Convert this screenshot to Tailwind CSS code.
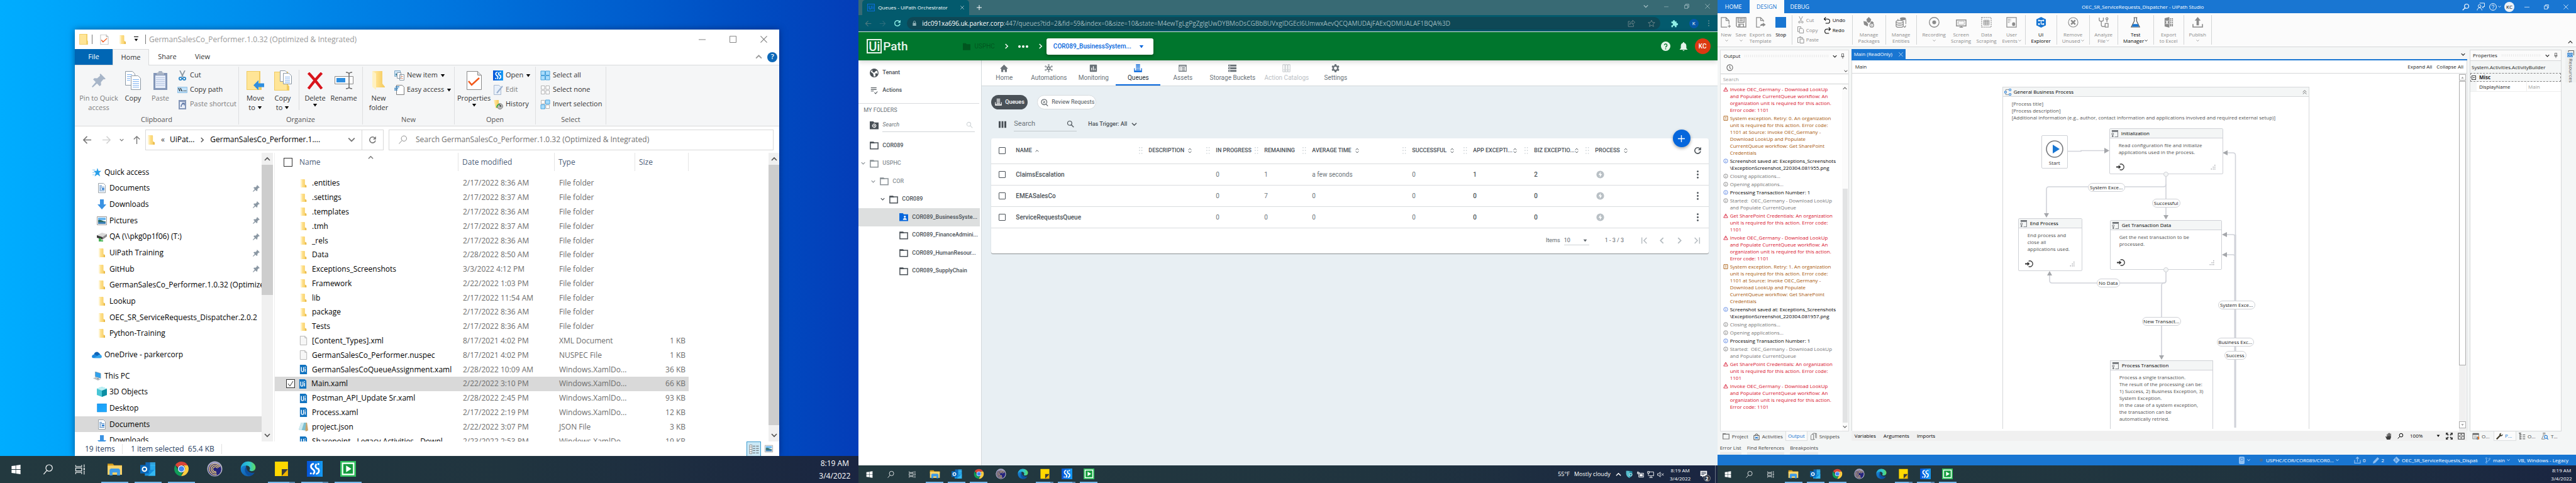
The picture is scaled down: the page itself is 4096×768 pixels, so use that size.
<!DOCTYPE html>
<html lang="en">
<head>
<meta charset="utf-8">
<title>Three desktops</title>
<script src="https://cdn.jsdelivr.net/npm/@tailwindcss/browser@4"></script>
</head>
<body class="relative grid h-screen grid-cols-3 overflow-hidden bg-[#1b2842] font-['Open_Sans',sans-serif] text-black">

<!-- Icon library -->
<svg class="absolute size-0" aria-hidden="true">
<defs>
<linearGradient id="gFold" x1="0" x2="1"><stop offset="0" stop-color="#fff0bd"/><stop offset=".35" stop-color="#ffe08a"/><stop offset="1" stop-color="#f3c95c"/></linearGradient>
<linearGradient id="gEdge" x1="0" y1="0" x2="1" y2="0"><stop offset="0" stop-color="#1aa6e0"/><stop offset=".6" stop-color="#34c8c8"/><stop offset="1" stop-color="#5fdc5a"/></linearGradient>
<linearGradient id="gEdge2" x1="0" y1="0" x2="1" y2="1"><stop offset="0" stop-color="#1b8fe0"/><stop offset="1" stop-color="#0b4c9c"/></linearGradient>
<linearGradient id="gS" x1="0" x2="1"><stop offset="0" stop-color="#0553d8"/><stop offset="1" stop-color="#159cf5"/></linearGradient>
<linearGradient id="gDesk" x1="0" y1="0" x2="1" y2="1"><stop offset="0" stop-color="#1a9cf5"/><stop offset="1" stop-color="#20adff"/></linearGradient>
</defs>
<symbol id="win" viewBox="0 0 24 24"><path fill="#fff" d="M3 5.2 11 4v7.5H3zM12 3.9 21 2.500V11.500H12zM3 12.500h8V20l-8-1.200zM12 12.500h9V21.500L12 20.100z"/></symbol>
<symbol id="srch" viewBox="0 0 24 24"><g fill="none" stroke="#fff" stroke-width="1.500"><circle cx="14" cy="9" r="6.500"/><path d="M9.500 14 3 21.500"/></g></symbol>
<symbol id="taskview" viewBox="0 0 24 24"><g fill="none" stroke="#fff" stroke-width="1.400"><path d="M3 3v3h12V3M3 21v-3h12v3M3 9h12v6H3zM20 2v6M20 14v8"/></g><path fill="#fff" d="M18.500 9.500h3v3h-3z"/></symbol>
<symbol id="explorer" viewBox="0 0 24 24"><path fill="#d39a18" d="M1 4h8l2 2.500h12V11H1z"/><path fill="#fbd469" d="M1 7h22v14H1z"/><path fill="#3f9be8" d="M4 22V13.500l2-2h12l2 2V22h-4.500v-4.500h-7V22z"/></symbol>
<symbol id="outlook" viewBox="0 0 24 24"><path fill="#1066b5" d="M8 2h15v14H8z"/><path fill="#28a8ea" d="M15 6h8v8h-8z"/><path fill="#50d9ff" d="M15 2h8v5h-8z" opacity=".5"/><path fill="#1490df" d="M7 14h16v8.500H7z"/><path fill="#35b8f1" d="M23 12.500 12 22.500h11z"/><path fill="#0a66b8" d="M0 6h13v13H0z"/><circle cx="6.500" cy="12.500" r="3.200" fill="none" stroke="#fff" stroke-width="1.900"/></symbol>
<symbol id="chrome" viewBox="0 0 24 24"><path fill="#db4437" d="M12 1a11 11 0 0 1 9.600 5.800H12A5.500 5.500 0 0 0 7 10L2.600 6.300A11 11 0 0 1 12 1z"/><path fill="#ffcd40" d="M21.600 6.800A11 11 0 0 1 11.500 23l5-8.200a5.500 5.500 0 0 0-1.500-8z"/><path fill="#0f9d58" d="M2.600 6.300 7.200 14.700a5.500 5.500 0 0 0 6.300 2.600L11.500 23A11 11 0 0 1 2.600 6.300z"/><circle cx="12" cy="12" r="5.300" fill="#fff"/><circle cx="12" cy="12" r="4.200" fill="#4285f4"/></symbol>
<symbol id="swirl" viewBox="0 0 24 24"><circle cx="12" cy="12" r="11.500" fill="#b9b7c6"/><circle cx="12" cy="12.500" r="10" fill="#25257e"/><g fill="none" stroke="#f1d27a" stroke-width="1.300"><path d="M20 9a8.500 8.500 0 1 0-5 11.500"/><path d="M18 10a6 6 0 1 0-3.500 8"/><path d="M16 11a3.700 3.700 0 1 0-2 5"/></g><path fill="#9c9cc8" d="M3 7a10 10 0 0 1 18 0C15 2.500 8 3 3 7z"/></symbol>
<symbol id="edge" viewBox="0 0 24 24"><path fill="url(#gEdge2)" d="M.6 12.500C.6 5 6 .6 12.200.6 9 4 8 8 9.500 12.500c2 5 7 6.500 12.300 5.500A11.500 11.500 0 0 1 .6 12.500z"/><path fill="#0c4fa0" d="M8.200 9.500c-3 5 .5 12.500 6.800 12.800 3.500-.8 5.500-2.600 6.800-4.600-3 1.300-9 .8-11-3z"/><path fill="url(#gEdge)" d="M.7 11C1.500 4.500 6.500.6 12.200.6c6.500 0 11.200 4.400 11.200 9 0 4-3 5.900-6 5.900-2 0-4-.8-3-2.200 1.500-2.200-.2-6.300-5-6.300C5 7 2 8.500.7 11z"/></symbol>
<symbol id="sticky" viewBox="0 0 24 24"><path fill="#ffd800" d="M2 1h20v12l-9 10H2z"/><path fill="#3b3b3b" d="M12.500 12.500H22L12.500 23z"/><path fill="#f0b400" d="m22 13-9.500 10H22z"/></symbol>
<symbol id="studio" viewBox="0 0 24 24"><path fill="url(#gS)" d="M0 0h24v24H0z"/><g fill="none" stroke="#fff" stroke-width="2.600" stroke-linecap="round"><path d="M9.500 4.500C5.500 5.500 5 10 9 12.500c3 2 3.500 4.500 1 7"/><path d="M17.500 12c2 3.500.5 6.500-2.500 7.500M14 5.500c-1.500 2-1 4.500 1.500 6"/></g><circle cx="17.500" cy="4.500" r="1.500" fill="#fff"/><circle cx="6" cy="19" r="1.500" fill="#fff"/></symbol>
<symbol id="camtasia" viewBox="0 0 24 24"><path fill="#2fbf5c" d="M0 0h24v24H0z"/><path fill="none" stroke="#fff" stroke-width="2" d="M3.500 3.500h17v17h-17z"/><path fill="#159a3e" d="M5 5h14v14H5z"/><path fill="#fff" d="m9 7 8 5-8 5z"/></symbol>
<symbol id="folder" viewBox="0 0 16 16"><path fill="url(#gFold)" d="M3 1h7l.5 1v8l2.500 1.500V15H4.500z"/><path fill="#e8b94a" d="M11 10.500 13 12v3h-2z"/><path fill="#fff3cc" d="M3 1l2 1.500V16l-2-2z"/></symbol>
<symbol id="folderf" viewBox="0 0 16 20"><path fill="#f0cb62" d="M0 0h15v12l1 1v7H0z"/><path fill="#ffe597" d="M1 1h12v18H1z"/></symbol>
<symbol id="file" viewBox="0 0 16 16"><path fill="#f7f7f7" stroke="#b2b2b2" d="M2.500.5h8l3 3v12h-11z"/><path fill="#ddd" stroke="#b2b2b2" d="M10.500.5v3h3"/></symbol>
<symbol id="uifile" viewBox="0 0 16 16"><path fill="#1173c0" d="M2 0h9.500L14 2.500V16H2z"/><path fill="none" stroke="#fff" stroke-width="1.500" d="M4.500 4v6a1.800 1.800 0 0 0 3.700 0V4M11 6.500V12M11 3.500v1.500"/></symbol>
<symbol id="note" viewBox="0 0 16 16"><path fill="#c9a26a" d="M5 1h9l2 13-4 2z"/><path fill="#7fc0cf" d="M4 1h8.500L11 14.500 0 13z"/><path fill="#cfeaf0" d="M4 1h5L5 13.600 0 13z"/></symbol>
<symbol id="documents" viewBox="0 0 16 16"><path fill="#fff" stroke="#9aa4ac" d="M2.500.5h8l3 3v12h-11z"/><path stroke="#4a86c4" d="M4 4.500h4M4 6.500h8M4 8.500h3M4 10.500h3M4 12.500h8"/><path fill="#3d86d4" d="M8 8h4v3H8z"/></symbol>
<symbol id="download" viewBox="0 0 16 16"><path fill="#3b93e3" d="M5 0h6v8h4l-7 8-7-8h4z"/></symbol>
<symbol id="pictures" viewBox="0 0 16 16"><path fill="#fff" stroke="#9a9a9a" d="M.5 1.500h15v13H.5z"/><path fill="#6db8ef" d="M2 3h12v4H2z"/><path fill="#2d6a63" d="M2 7c4-2 7 2 12 2v1H2z"/><path fill="#3b7fb5" d="M2 10h12v3H2z"/></symbol>
<symbol id="drive" viewBox="0 0 16 16"><path fill="#d9d9d9" d="m0 6 8-4 8 2-7 5z"/><path fill="#8c8c8c" d="m9 9 7-5v4l-7 5z"/><path fill="#3c3c3c" d="m0 6 9 3v4l-9-3z"/><path fill="#49b356" d="M3 11h4v3h3v2H3z"/></symbol>
<symbol id="qstar" viewBox="0 0 16 16"><path fill="#2a9fe8" d="m9 0 2 5.500h5l-4 3.500 2 6.500L9 12l-5 3.500L6 9 2 5.500h5.500z"/><path stroke="#7cc4f2" d="M0 3.500h5M0 8.500h4M0 12.500h4"/></symbol>
<symbol id="cloud" viewBox="0 0 18 16"><path fill="#0f64b8" d="M4 8a5 5 0 0 1 9-3 5 5 0 0 1 2 6H3z"/><path fill="#1e88dd" d="M0 11a4 4 0 0 1 6-3l10 6H3a3 3 0 0 1-3-3z"/><path fill="#32a5ee" d="m4 14 9-6a4 4 0 0 1 5 3 3 3 0 0 1-3 3z"/></symbol>
<symbol id="pc" viewBox="0 0 16 16"><path fill="#2fa2ee" stroke="#7d8a94" stroke-width=".6" d="m5 0 10 3v9L5 9z"/><path fill="#b9c0c5" d="m1 12 5-2 9 4-5 2z"/><path fill="#8b9399" d="m9 11 2 .5V14H9z"/></symbol>
<symbol id="cube" viewBox="0 0 16 16"><path fill="#49c6d6" d="m8 0 8 3v10l-8 3-8-3V3z"/><path fill="#0b8ea3" d="m8 6 8-3v10l-8 3z"/><path fill="#bdf0f4" d="m8 0 8 3-8 3-8-3z"/></symbol>
<symbol id="desktop" viewBox="0 0 16 16"><path fill="url(#gDesk)" stroke="#0e84d8" stroke-width=".5" d="M.5 1h15v13H.5z"/></symbol>
<symbol id="pin" viewBox="0 0 16 16"><path fill="currentColor" d="m10 0 6 6-1.500.8-1-.3-3 3.500.2 3.200-1.700 1.300-3-3L1 16 0 15l4.500-5.200-3-3L3 5.200l3.200.3 3.300-3L9.200 1z"/></symbol>
<symbol id="copy" viewBox="0 0 26 30"><g fill="#fff" stroke="#8b98a4"><path d="M.5.5h11l4 4v18H.5z"/><path d="M9.500 7.500h11l4 4v18h-15z"/></g><path stroke="#7fb2f0" d="M3 5.500h8M3 8.500h6M3 11.500h5M3 14.500h5M12 13.500h10M12 16.500h10M12 19.500h10M12 22.500h10M12 25.500h10"/></symbol>
<symbol id="paste" viewBox="0 0 22 30"><path fill="#8396b8" d="M0 3h22v27H0z"/><path fill="#e4ebf8" d="M3 7h16v20H3z"/><path stroke="#b9c8e4" d="M4 10.500h14M4 13.500h14M4 16.500h14M4 19.500h14M4 22.500h14"/><path fill="#a9b4c6" d="M5 3 8 2a3 3 0 0 1 6 0l3 1v3H5z"/></symbol>
<symbol id="cut" viewBox="0 0 16 16"><path stroke="#8c98a2" stroke-width="1.700" d="M4 0l5 10M12 0 7 10"/><g fill="none" stroke="#2a86c8" stroke-width="1.800"><circle cx="5" cy="13" r="2.200"/><circle cx="11" cy="13" r="2.200"/></g></symbol>
<symbol id="path" viewBox="0 0 16 16"><path fill="#bfe0f8" stroke="#8fbfe4" d="M.5 3.500h15v9H.5z"/><path stroke="#111" stroke-width="1.100" d="M2 5l2 5M5 5l2 5M8.500 9.500h1.200M11 9.500h1.200M13 9.500h1.200"/></symbol>
<symbol id="shortcut" viewBox="0 0 16 16"><path fill="#8396b8" d="M2 1h12v15H2z"/><path fill="#e9eef8" d="M4 4h8v10H4z"/><path fill="none" stroke="#5f77a6" stroke-width="1.500" d="M6 12c0-3 1-5 4-5M7.500 6H11v3.500"/></symbol>
<symbol id="moveto" viewBox="0 0 28 30"><path fill="#f0cb62" d="M0 0h22v21l2 2v7H0z"/><path fill="#ffe597" d="M1 1h19v28H1z"/><path fill="#2f8fe0" d="M11 22.500 19 14.500v5h9v6h-9v5z"/></symbol>
<symbol id="copyto" viewBox="0 0 28 32"><path fill="#f0cb62" d="M0 2h22v21l2 2v7H0z"/><path fill="#ffe597" d="M1 3h19v28H1z"/><g fill="#fff" stroke="#8b98a4"><path d="M9.500.5h8l3 3v14h-11z"/><path d="M14.500 4.500h9l4 4v13h-13z"/></g><path stroke="#7fb2f0" d="M17 10.500h8M17 13.500h8M17 16.500h8M17 19h8"/></symbol>
<symbol id="del" viewBox="0 0 26 28"><path fill="none" stroke="#d8141c" stroke-width="4.500" d="M2 1c8 8 14 16 22 26M24 1C16 9 10 17 2 27"/></symbol>
<symbol id="rename" viewBox="0 0 30 28"><path fill="#fff" stroke="#8a8a8a" d="M.5 7.500h29v12H.5z"/><path fill="#2f8fe0" d="M3 10h14v7H3z"/><path fill="none" stroke="#6d6d6d" stroke-width="1.500" d="M18 1c3 0 5 1 5 3v20c0 2-2 3-5 3M28 1c-3 0-5 1-5 3M28 27c-3 0-5-1-5-3"/></symbol>
<symbol id="newfolder" viewBox="0 0 20 30"><path fill="url(#gFold)" d="M0 0h16v20l4 5v1H5z"/><path fill="#fff1c2" d="m0 0 6 4v26l-6-5z"/></symbol>
<symbol id="newitem" viewBox="0 0 16 16"><path fill="#cfe6f7" stroke="#7fa9c8" d="M.5.5h9v9h-9z"/><path fill="#3d86a4" d="M2 5h6v3H2z"/><path fill="#fff" stroke="#8b98a4" d="M4.500 3.500h6v9h-6zM8.500 6.500h7v9h-7z"/><path stroke="#e0967a" d="M10 9.500h4M10 12.500h4"/></symbol>
<symbol id="easy" viewBox="0 0 16 16"><path fill="#fff" stroke="#7d7d7d" d="M3.500.5h9l3 3v12h-12z"/><path stroke="#2f7fc0" stroke-width="1.300" d="M2 3h6M0 5.500h6M0 8h5"/></symbol>
<symbol id="prop" viewBox="0 0 24 30"><path fill="#fff" stroke="#8a8a8a" d="M.5.5h17l6 6v23H.500z"/><path fill="#ddd" stroke="#8a8a8a" d="M17.500.5v6h6"/><path fill="none" stroke="#f2581a" stroke-width="2.500" d="m3 16 5 6L20 11"/></symbol>
<symbol id="edit" viewBox="0 0 16 16"><path fill="#e8f0fa" stroke="#a9b9d0" d="M1.500.5h8l3 3v12h-11z"/><path fill="none" stroke="#9bb1d0" stroke-width="2" d="M15 2 6 13"/></symbol>
<symbol id="history" viewBox="0 0 16 16"><path fill="url(#gFold)" d="M1 1h8v13H4z"/><circle cx="11" cy="11" r="4.500" fill="#b9b9b9" stroke="#888"/><path fill="none" stroke="#2fa844" stroke-width="1.700" d="M6 13c0-4 2-5 5-5"/><path stroke="#444" d="M11 8.500V11h2"/></symbol>
<symbol id="selall" viewBox="0 0 16 16"><path fill="#a9dcfb" stroke="#4ba3dc" d="M1 1h6.500v6.500H1zM8.500 1H15v6.500H8.500zM1 8.500h6.500V15H1zM8.500 8.500H15V15H8.500z"/></symbol>
<symbol id="selnone" viewBox="0 0 16 16"><path fill="#fff" stroke="#a2a2a2" stroke-width=".8" d="M1.500 1.500h5.500V7H1.500zM9 1.500h5.500V7H9zM1.500 9H7v5.500H1.500zM9 9h5.500v5.500H9z"/></symbol>
<symbol id="selinv" viewBox="0 0 16 16"><path fill="#fff" stroke="#a2a2a2" stroke-width=".8" d="M1.500 1.500h5.500V7H1.500zM9 9h5.500v5.500H9z"/><path fill="#a9dcfb" stroke="#4ba3dc" d="M8.500 1H15v6.500H8.500zM1 8.500h6.500V15H1z"/></symbol>
<symbol id="up" viewBox="0 0 10 10"><path fill="none" stroke="currentColor" stroke-width="1.600" d="m1 7 4-4 4 4"/></symbol>
<symbol id="down" viewBox="0 0 10 10"><path fill="none" stroke="currentColor" stroke-width="1.600" d="m1 3 4 4 4-4"/></symbol>
<symbol id="right" viewBox="0 0 10 10"><path fill="none" stroke="currentColor" stroke-width="1.600" d="m3 1 4 4-4 4"/></symbol>
<symbol id="left" viewBox="0 0 10 10"><path fill="none" stroke="currentColor" stroke-width="1.600" d="M7 1 3 5l4 4"/></symbol>
<symbol id="first" viewBox="0 0 10 10"><path fill="none" stroke="currentColor" stroke-width="1.300" d="M8.500 1 4.500 5l4 4M1.500.5v9"/></symbol>
<symbol id="last" viewBox="0 0 10 10"><path fill="none" stroke="currentColor" stroke-width="1.300" d="m1.500 1 4 4-4 4M8.500.5v9"/></symbol>
<symbol id="tri" viewBox="0 0 10 10"><path fill="currentColor" d="M1 2.500h8L5 8z"/></symbol>
<symbol id="triup" viewBox="0 0 10 10"><path fill="currentColor" d="M1 7.500h8L5 2z"/></symbol>
<symbol id="aleft" viewBox="0 0 16 16"><path fill="none" stroke="currentColor" stroke-width="1.700" d="M15 8H2M8 2 2 8l6 6"/></symbol>
<symbol id="aright" viewBox="0 0 16 16"><path fill="none" stroke="currentColor" stroke-width="1.700" d="M1 8h13M8 2l6 6-6 6"/></symbol>
<symbol id="aup" viewBox="0 0 16 16"><path fill="none" stroke="currentColor" stroke-width="1.500" d="M8 15V2M3 7l5-5 5 5"/></symbol>
<symbol id="reload" viewBox="0 0 16 16"><path fill="none" stroke="currentColor" stroke-width="1.900" d="M13.500 9A5.700 5.700 0 1 1 12 4"/><path fill="currentColor" d="M14.500 1v6h-6z"/></symbol>
<symbol id="glass" viewBox="0 0 16 16"><g fill="none" stroke="currentColor" stroke-width="1.600"><circle cx="6.500" cy="6.500" r="4.500"/><path d="m10 10 5 5"/></g></symbol>
<symbol id="glassl" viewBox="0 0 16 16"><g fill="none" stroke="currentColor" stroke-width="1.100"><circle cx="9.500" cy="6" r="4.800"/><path d="M6 9.500.5 15.500"/></g></symbol>
<symbol id="min" viewBox="0 0 12 12"><path stroke="currentColor" d="M0 6.500h12"/></symbol>
<symbol id="max" viewBox="0 0 12 12"><path fill="none" stroke="currentColor" d="M.5.5h11v11H.5z"/></symbol>
<symbol id="restore" viewBox="0 0 12 12"><path fill="none" stroke="currentColor" stroke-width="1.200" d="M1 3.500h7.500V11H1zM3.500 3.500V1H11v7.500H8.500"/></symbol>
<symbol id="x" viewBox="0 0 12 12"><path fill="none" stroke="currentColor" stroke-width="1.100" d="m.5.5 11 11M11.500.5l-11 11"/></symbol>
<symbol id="plus" viewBox="0 0 12 12"><path stroke="currentColor" stroke-width="1.500" d="M6 0v12M0 6h12"/></symbol>
<symbol id="lock" viewBox="0 0 12 12"><path fill="currentColor" d="M2 5h8v7H2z"/><path fill="none" stroke="currentColor" stroke-width="1.300" d="M3.700 5V3a2.300 2.300 0 0 1 4.600 0v2"/></symbol>
<symbol id="share" viewBox="0 0 16 16"><path fill="none" stroke="currentColor" stroke-width="1.300" d="M5 4H1.500v11h11v-4M4.500 11c0-5 3-6.500 6-6.500V1.500l5 4.500-5 4.500V7.500c-2.500 0-4.500 1-6 3.500z"/></symbol>
<symbol id="starl" viewBox="0 0 16 16"><path fill="none" stroke="currentColor" stroke-width="1.300" d="m8 1.500 2 4.600 5 .4-3.800 3.300L12.400 15 8 12.200 3.600 15l1.200-5.200L1 6.500l5-.4z"/></symbol>
<symbol id="puzzle" viewBox="0 0 16 16"><path fill="currentColor" d="M2 4h3.200a2 2 0 1 1 3.600 0H12v3.500a2 2 0 1 1 0 3.500v4H8.800a2 2 0 1 0-3.600 0H2v-4a2 2 0 1 0 0-3.500z"/></symbol>
<symbol id="dots" viewBox="0 0 16 16"><g fill="currentColor"><circle cx="8" cy="2" r="1.700"/><circle cx="8" cy="8" r="1.700"/><circle cx="8" cy="14" r="1.700"/></g></symbol>
<symbol id="help" viewBox="0 0 16 16"><circle cx="8" cy="8" r="8" fill="#e6f4ea"/><path fill="none" stroke="#0a7a30" stroke-width="1.500" d="M5.700 6.200a2.300 2.300 0 1 1 3.600 2c-.9.6-1.300 1-1.300 2M8 11.500v1.700"/></symbol>
<symbol id="bell" viewBox="0 0 16 16"><path fill="#e6f4ea" d="M8 0c1 0 1.200.7 1.200 1.400C12 2 13 4.500 13 7v4l2 2v.7H1V13l2-2V7c0-2.500 1-5 3.800-5.600C6.800.7 7 0 8 0zM6.300 14.500h3.400A1.700 1.500 0 0 1 8 16a1.700 1.500 0 0 1-1.700-1.500z"/></symbol>
<symbol id="globe" viewBox="0 0 16 16"><circle cx="8" cy="8" r="7.200" fill="none" stroke="currentColor" stroke-width="1.500"/><path fill="currentColor" d="M1 6c2 0 3 2 5 3 1 1 0 2 1 3v3C3 15 .5 11 1 6zM5 1.500c3-1 6-.5 8 1.500-1 2-3 1-3.500 3S8 7 6.500 7 4 4 5 1.500zM10 9c2-1 3 0 4.500 1-.5 2-2 4-4 5z"/></symbol>
<symbol id="actions" viewBox="0 0 16 16"><path fill="none" stroke="currentColor" stroke-width="1.400" d="M1 2h12M1 5.500h12M1 9h6M8.500 12l2.500 2.500L15 10"/></symbol>
<symbol id="fold" viewBox="0 0 16 16"><path fill="none" stroke="currentColor" stroke-width="1.700" d="M1 3.500h14v11H1z"/><path fill="currentColor" d="M.2 1.500H7l2 3H.2z"/></symbol>
<symbol id="foldg" viewBox="0 0 16 16"><path fill="currentColor" d="M0 1h6.500L8 3h8v12.500H0z"/><circle cx="8" cy="9" r="3" fill="none" stroke="#fff" stroke-width="1.200"/><circle cx="8" cy="9" r="1.200" fill="#fff"/><path stroke="#fff" d="M8 5v1M8 12v1M4 9h1M11 9h1"/></symbol>
<symbol id="foldu" viewBox="0 0 16 16"><path fill="currentColor" d="M0 1h6.500L8 3h8v12.500H0z"/><circle cx="10" cy="7.500" r="1.800" fill="#fff"/><path fill="#fff" d="M6.500 13c0-4 7-4 7 0z"/></symbol>
<symbol id="foldd" viewBox="0 0 16 16"><path fill="currentColor" d="M0 1h6.500L8 3h8v12.500H0z"/></symbol>
<symbol id="home" viewBox="0 0 16 16"><path fill="currentColor" d="M8 1 0 9h2.500v6.500h4V11h3v4.500h4V9H16z"/></symbol>
<symbol id="auto" viewBox="0 0 16 16"><g fill="none" stroke="currentColor" stroke-width="1.200"><circle cx="8" cy="8" r="2.600" stroke-width="2"/><circle cx="8" cy="1.700" r="1.200"/><circle cx="8" cy="14.300" r="1.200"/><circle cx="2" cy="4.500" r="1.200"/><circle cx="14" cy="4.500" r="1.200"/><circle cx="2" cy="11.500" r="1.200"/><circle cx="14" cy="11.500" r="1.200"/><path d="M8 3v3M8 10v3M3 5l3 2M13 5l-3 2M3 11l3-2M13 11l-3-2"/></g></symbol>
<symbol id="monitor" viewBox="0 0 16 16"><path fill="currentColor" fill-rule="evenodd" d="M2 1h12a1 1 0 0 1 1 1v12a1 1 0 0 1-1 1H2a1 1 0 0 1-1-1V2a1 1 0 0 1 1-1zm2 6v5h1.500V7zm3.300-3v8h1.500V4zm3.300 4.500V12h1.500V8.500z"/></symbol>
<symbol id="queue" viewBox="0 0 16 16"><path fill="none" stroke="currentColor" stroke-width="1.500" d="M4 .8h8M4 3.300h8M4 5.800h8M4 8.300h8M4 10.800h8M1 8v7h14V8M1 13.500h14"/></symbol>
<symbol id="assets" viewBox="0 0 16 16"><path fill="none" stroke="currentColor" stroke-width="1.400" d="M1 2h14v12H1zM1 4h14M3.500 7H5M6.500 7h6M3.500 9.500H5M6.500 9.500h6M3.500 12H5M6.500 12h6"/></symbol>
<symbol id="storage" viewBox="0 0 16 16"><path fill="currentColor" d="M0 1h16v3.600H0zM0 6.200h16v3.600H0zM0 11.400h16V15H0z"/><path fill="#fff" d="M2 2h2v1.500H2zM2 7.300h2v1.500H2zM2 12.500h2V14H2z"/></symbol>
<symbol id="catalog" viewBox="0 0 16 16"><path fill="none" stroke="currentColor" stroke-width="1.100" d="M1 1h4v14H1zM6 1h4v14H6zM11 1h4v14h-4zM2 11h2M7 11h2M12 11h2"/></symbol>
<symbol id="gear" viewBox="0 0 16 16"><path fill="currentColor" fill-rule="evenodd" d="M6.500 0h3l.5 2.300 1.700 1L14 2.600l1.500 2.600L13.800 7v2l1.700 1.700-1.500 2.700-2.300-.7-1.700 1-.5 2.300h-3L6 13.700l-1.700-1-2.300.7-1.500-2.700L2.200 9V7L.5 5.200 2 2.600l2.300.7 1.700-1zM8 5a3 3 0 1 0 0 6 3 3 0 0 0 0-6z"/></symbol>
<symbol id="review" viewBox="0 0 16 16"><g fill="none" stroke="currentColor" stroke-width="1.400"><circle cx="7" cy="7" r="5.800"/><path d="m11 11.500 4 4M5 9.500l4-4.500M5 5h1.500M8 9h1.500"/></g></symbol>
<symbol id="cols" viewBox="0 0 16 16"><path fill="currentColor" d="M0 1h4v14H0zM6 1h4v14H6zM12 1h4v14h-4z"/></symbol>
<symbol id="sort" viewBox="0 0 8 12"><path fill="none" stroke="currentColor" stroke-width="1.300" d="m1 4.500 3-3 3 3M1 7.500l3 3 3-3"/></symbol>
<symbol id="grip" viewBox="0 0 6 12"><path fill="#c5cbcf" d="M0 0h1.500v1.500H0zM4 0h1.500v1.500H4zM0 5h1.500v1.500H0zM4 5h1.500v1.500H4zM0 10h1.500v1.500H0zM4 10h1.500v1.500H4z"/></symbol>
<symbol id="bolt" viewBox="0 0 16 16"><circle cx="8" cy="8" r="7.500" fill="#b9c0c5"/><path fill="#fff" d="M9 2.500 4.500 9H7.500L7 13.500 11.500 7H8.500z"/></symbol>
<symbol id="shield" viewBox="0 0 16 16"><path fill="#1f8aa0" d="M1 1c5 0 9 0 13 1v7c0 3-3 5-6 7-4-2-7-5-7-9z"/><path fill="#57bccb" d="M1 1c3 0 5 0 7 .4V16C4 14 1 11 1 7z"/><circle cx="10.500" cy="9" r="3" fill="none" stroke="#d7eef2" stroke-width="1.300"/></symbol>
<symbol id="batt" viewBox="0 0 16 16"><path fill="none" stroke="#fff" stroke-width="1.400" d="M4 5h11v9H4zM2 1v3M0 3h5v3H0z"/><path fill="#fff" d="M6 7h7v5H6z"/></symbol>
<symbol id="net" viewBox="0 0 16 16"><path fill="none" stroke="#fff" stroke-width="1.300" d="M4 2h11v9H4M9 11v4M5 15h8M1 1h4v4H1zM3 5v6"/></symbol>
<symbol id="vol" viewBox="0 0 16 16"><path fill="none" stroke="#fff" stroke-width="1.300" d="M1 6h2.500L7 2.500v11L3.500 10H1zM10 5.500l5 5M15 5.500l-5 5"/></symbol>
<symbol id="notif" viewBox="0 0 16 16"><path fill="#fff" d="M1 1h14v11H8l-3 3v-3H1z"/><path stroke="#1b2842" stroke-width="1.200" d="M3 4h10M3 6.500h10M3 9h6"/></symbol>
<!-- Studio ribbon -->
<symbol id="snew" viewBox="0 0 18 18"><path fill="none" stroke="currentColor" stroke-width="1.300" d="M11 17H1V1h8l5 5v6M9 1v5h5M14.500 13v5M12 15.500h5"/></symbol>
<symbol id="ssave" viewBox="0 0 18 18"><path fill="none" stroke="currentColor" stroke-width="1.500" d="M1 1h16v16H3l-2-2zM4 1v8h10V1M6 3.500h6M6 6h6M5 17v-5h8v5M7 13v3"/></symbol>
<symbol id="sexport" viewBox="0 0 18 18"><path fill="none" stroke="currentColor" stroke-width="1.300" d="M8 17H2V1h7l5 5v2M9 1v5h5"/><path fill="currentColor" d="M8 16c0-3 2-4.500 5-4.500V9.500l4.500 3.500-4.500 3.500v-2c-2 0-4 0-5 1.500z"/></symbol>
<symbol id="sstop" viewBox="0 0 18 18"><path fill="#1976d2" d="M0 0h18v18H0z"/></symbol>
<symbol id="scut" viewBox="0 0 12 12"><g fill="none" stroke="currentColor"><path d="M3 0l4 8M9 0 5 8"/><circle cx="3.500" cy="10" r="1.500"/><circle cx="8.500" cy="10" r="1.500"/></g></symbol>
<symbol id="scopy" viewBox="0 0 12 12"><path fill="none" stroke="currentColor" d="M3 9H.5V.5H6V3M3.500 3.500h5l2 2v6h-7z"/></symbol>
<symbol id="spaste" viewBox="0 0 12 12"><path fill="none" stroke="currentColor" d="M3 10.500H.5V2H9v2M3 2l1-1.500h2L7 2M4.500 4.500H11v7H4.500z"/></symbol>
<symbol id="undo" viewBox="0 0 12 12"><path fill="none" stroke="currentColor" stroke-width="1.100" d="M3 11h3.500a3.700 3.700 0 0 0 0-7.500H1M3.500.5l-3 3 3 3"/></symbol>
<symbol id="redo" viewBox="0 0 12 12"><path fill="none" stroke="currentColor" stroke-width="1.100" d="M9 11H5.500a3.700 3.700 0 0 1 0-7.500H11M8.500.5l3 3-3 3"/></symbol>
<symbol id="spack" viewBox="0 0 18 18"><path fill="currentColor" d="m9 0 4 4-1 4-3 2-3-2-1-4zM0 7l5 1 3 4-1 4-6-3zM11 10l3-3 3 2v2z"/><circle cx="14" cy="14" r="3.200" fill="none" stroke="currentColor" stroke-width="1.300"/><path stroke="currentColor" d="M14 12v4"/></symbol>
<symbol id="sent" viewBox="0 0 18 18"><g fill="#fbfbfb" stroke="currentColor" stroke-width="1.400"><path d="M1 8v7c0 1.500 3 2.500 6 2.500s6-1 6-2.500V8M1 11.500c0 1.500 3 2.300 6 2.300s6-.8 6-2.300"/><ellipse cx="7" cy="8" rx="6" ry="2.300"/></g><ellipse cx="12.500" cy="3" rx="5" ry="2.500" fill="currentColor"/><path fill="none" stroke="currentColor" stroke-width="1.300" d="M4 6V3.500M17.500 4v8M14 16l1.500 1.500 2-3"/></symbol>
<symbol id="srec" viewBox="0 0 18 18"><circle cx="9" cy="9" r="8.200" fill="none" stroke="currentColor" stroke-width="1.400"/><circle cx="9" cy="9" r="3.200" fill="currentColor"/></symbol>
<symbol id="sscr" viewBox="0 0 18 18"><path fill="none" stroke="currentColor" stroke-width="1.500" d="M1 5h16v10H1zM9 15v2M6 17.300h6"/><path fill="none" stroke="currentColor" stroke-dasharray="1.500 1" d="M4 7.500h10v5H4z"/></symbol>
<symbol id="sdata" viewBox="0 0 18 18"><path fill="none" stroke="currentColor" stroke-width="1.300" stroke-dasharray="2 1.300" d="M1 1h16v16H1z"/><path fill="none" stroke="currentColor" d="M4.500 5.500h9v8h-9zM4.500 8h9M4.500 10.500h9M7.500 5.500v8M10.500 5.500v8"/></symbol>
<symbol id="suser" viewBox="0 0 18 18"><path fill="none" stroke="currentColor" stroke-width="1.300" d="M1 1h16v16H1z"/><path stroke="currentColor" stroke-width="1.500" stroke-dasharray="1.300 1" d="M3 4h5M3 6.500h5M3 9h3"/><rect x="10" y="9" width="5" height="6" rx="2" fill="currentColor"/></symbol>
<symbol id="suix" viewBox="0 0 18 18"><path fill="#1976d2" d="m9 0 8 4v10l-8 4-8-4V4z"/><path fill="none" stroke="#fff" stroke-width="1.200" d="M5 6h8M9 6v6M9 12h4M5 12h2"/><path fill="#fff" d="M4 4.700h2.500v2.500H4zM11.500 4.700H14v2.500h-2.500zM11.500 10.700H14v2.500h-2.500zM4 10.700h2.500v2.500H4z"/></symbol>
<symbol id="srem" viewBox="0 0 18 18"><circle cx="9" cy="9" r="8" fill="none" stroke="currentColor" stroke-width="1.200"/><path stroke="currentColor" stroke-width="2.700" d="m5.500 5.500 7 7M12.500 5.500l-7 7"/></symbol>
<symbol id="sana" viewBox="0 0 18 18"><g fill="none" stroke="currentColor" stroke-width="1.400"><path d="M2 1v4c0 3 7 3 7 0V1M5.500 7.500V13c0 4 4 4 6 2"/><circle cx="15" cy="3" r="1.800"/><path d="M15 5v4M12 11h5v6h-5z"/></g></symbol>
<symbol id="stest" viewBox="0 0 18 18"><path fill="none" stroke="#555" stroke-width="1.200" d="M6 1h6M7 1v6L2 17h14L11 7V1"/><path fill="#1976d2" d="M5 12h8l2 4.500H3z"/></symbol>
<symbol id="sxls" viewBox="0 0 18 18"><path fill="currentColor" d="m2 2 8-2v18l-8-2zM11 2h5v14h-5z"/><path stroke="#fff" stroke-width="1.300" d="m4 6 4 6M8 6l-4 6"/><path stroke="#fff" d="M11 5h5M11 8h5M11 11h5M13.500 2v14"/></symbol>
<symbol id="spub" viewBox="0 0 18 18"><path fill="currentColor" d="m9 0 5 6h-3v8H7V6H4z"/><path fill="none" stroke="currentColor" stroke-width="1.700" d="M1 12v5h16v-5"/></symbol>
<symbol id="lerr" viewBox="0 0 8 8"><path fill="none" stroke="#d8213b" stroke-width=".9" d="M4 1 7.300 7H.7zM4 3v2"/></symbol>
<symbol id="lwarn" viewBox="0 0 8 8"><path fill="none" stroke="#a8590a" stroke-width=".9" d="M1 .7h6v6.600H1zM4 2v2.500M4 5.300v.9"/></symbol>
<symbol id="linfo" viewBox="0 0 8 8"><g fill="none" stroke="currentColor" stroke-width=".8"><circle cx="4" cy="4" r="3.200"/><path d="M4 2v.7M4 3.500V6"/></g></symbol>
<symbol id="spin" viewBox="0 0 8 12"><path fill="none" stroke="#444" d="M2 .5h4v6H2zM.5 6.500h7M4 6.500V11"/></symbol>
<symbol id="clock" viewBox="0 0 12 12"><g fill="none" stroke="#666" stroke-width="1.200"><circle cx="6" cy="6" r="5"/><path d="M6 3v3.500l2 1.500"/></g></symbol>
<symbol id="flow" viewBox="0 0 12 12"><path fill="none" stroke="#888" d="M8 1.500H2.500v9H8"/><path fill="#fff" stroke="#1976d2" d="M8.500.500h3v3h-3zM8.500 8.500h3v3h-3zM.5 4.500h3v3h-3z"/></symbol>
<symbol id="state" viewBox="0 0 12 12"><path fill="#6d7176" d="M1 0h11v3H1z"/><path fill="none" stroke="#8a8d92" stroke-width="1.200" d="M11.400 3v8.400H6"/><circle cx="2.500" cy="6.500" r="1.600" fill="none" stroke="#6d7176"/><path stroke="#6d7176" stroke-width="1.200" d="M2.500 8v4M1 10.500h3"/></symbol>
<symbol id="enter" viewBox="0 0 14 14"><path fill="none" stroke="#444" stroke-width="1.500" d="M6 2.500a5 5 0 1 1 0 9"/><path fill="#333" d="M0 6h4V3.500L8 7l-4 3.500V8H0z"/></symbol>
<symbol id="resize" viewBox="0 0 8 8"><path fill="#a9abb0" d="M6 0h1.500v1.500H6zM3.500 3H5v1.500H3.500zM6 3h1.500v1.500H6zM.5 6H2v1.500H.5zM3.500 6H5v1.500H3.500zM6 6h1.500v1.500H6z"/></symbol>
<symbol id="upup" viewBox="0 0 10 10"><path fill="none" stroke="#333" d="m1 5 4-4 4 4M1 9.500l4-4 4 4"/></symbol>
<symbol id="bag" viewBox="0 0 12 14"><path fill="none" stroke="#555" stroke-width="1.200" d="M1 5h10v8.400H1zM3.500 5a2.500 3 0 0 1 5 0"/><path stroke="#1976d2" stroke-width="1.300" d="m3.500 8 5 3M8.500 8l-5 3"/></symbol>
<symbol id="snip" viewBox="0 0 12 14"><path fill="none" stroke="#666" d="M.5 13V5l2-2h3v10zM3 3l2-2h4v9M6 12.500h2M9 1.500h2.500v9"/></symbol>
<symbol id="hand" viewBox="0 0 14 14"><path fill="#3c3c3c" d="M3 14 0 8l1-.8 2 1.800V3h1.500v4h.7V1h1.600v6h.7V.5H9V7h.7V2h1.500v8L9.500 14z"/></symbol>
<symbol id="fit" viewBox="0 0 14 14"><path fill="#3c3c3c" d="M0 0h5L3.500 1.500 6 4 4 6 1.500 3.500 0 5zM14 0v5l-1.500-1.500L10 6 8 4l2.500-2.500L9 0zM0 14V9l1.500 1.500L4 8l2 2-2.500 2.500L5 14zM14 14H9l1.500-1.500L8 10l2-2 2.500 2.500L14 9z"/></symbol>
<symbol id="fit2" viewBox="0 0 14 14"><path fill="none" stroke="#3c3c3c" stroke-width="1.500" d="M1 1h12v12H1z"/><path fill="#3c3c3c" d="m7 2 2 2.500H5zM7 12l2-2.500H5zM2 7l2.500-2v4zM12 7 9.500 5v4zM6 6h2v2H6z"/></symbol>
<symbol id="wrench" viewBox="0 0 14 14"><path fill="#3f3a2a" d="M13.500 3 11 5 9 3.500 10.500 1C8 .5 6 2.500 6.700 5L0 12l2 2 6.700-7C11 8 14 6 13.500 3z"/></symbol>
<symbol id="objx" viewBox="0 0 14 14"><path fill="none" stroke="#777" d="M1 1.500h11v10H1z"/><path fill="#666" d="M1 1h11v3H1z"/><path stroke="#999" d="M3 6.500h5M3 9h4"/><path fill="#e07a2c" d="m8 8 3-1 2 1v4l-3 1-2-1z"/><path fill="#3d8fd8" d="m8 8 2 1v4l-2-1z"/></symbol>
<symbol id="outl" viewBox="0 0 14 14"><path fill="none" stroke="#444" stroke-width="1.200" d="M2.500 0v14M0 1h5M2.500 4.500H6M2.500 8.500H6M2.500 12.500H6M8 4.500h5M8 8.500h5M8 12.500h5"/></symbol>
<symbol id="texp" viewBox="0 0 14 14"><path fill="none" stroke="#666" d="M3 .5h5M4 .5v5L.5 13H7M7 .5v4"/><g fill="none" stroke="#1976d2" stroke-width="1.300"><circle cx="9" cy="8.500" r="3"/><path d="m11 11 3 3"/></g></symbol>
<symbol id="feedback" viewBox="0 0 14 14"><g fill="none" stroke="#fff"><circle cx="5" cy="6" r="2.300"/><path d="M1 13.500c0-6 8-6 8 0M5 1h8.500v6H11v2.500L9 7"/></g></symbol>
<symbol id="qm" viewBox="0 0 14 14"><g fill="none" stroke="#fff" stroke-width="1.100"><circle cx="7" cy="7" r="6.300"/><path d="M5 5.500a2 2 0 1 1 3 1.700c-.8.500-1 .8-1 1.600M7 10v1.200"/></g></symbol>
<symbol id="pencil" viewBox="0 0 12 12"><path fill="#8fc0f2" d="M9 0l3 3-8 8-4 1 1-4z"/></symbol>
<symbol id="git" viewBox="0 0 12 12"><path fill="#8fc0f2" d="m6 0 6 6-6 6-6-6z"/><path stroke="#1976d2" d="M5 3v6M5 5l3 2"/></symbol>
<symbol id="branch" viewBox="0 0 12 12"><g fill="none" stroke="#8fc0f2"><circle cx="3" cy="2" r="1.300"/><circle cx="3" cy="10" r="1.300"/><circle cx="9" cy="3" r="1.300"/><path d="M3 3.300v5.400M9 4.300C9 7 6 7 3 8"/></g></symbol>
<symbol id="push" viewBox="0 0 12 12"><path fill="none" stroke="#8fc0f2" stroke-width="1.300" d="M1 6v5.300h10V6M6 9V1M3.500 3.500 6 1l2.500 2.500"/></symbol>
</svg>

<!-- ============ Screen 1: File Explorer ============ -->
<section class="flex min-w-0 flex-col overflow-hidden bg-linear-to-r from-[#00adff] via-[#0078e0] via-50% to-[#043db8]">
  <div class="flex min-h-0 flex-1 pt-[47px] pr-[126px] pl-[119px]">
    <div class="flex min-w-0 flex-1 flex-col overflow-hidden bg-white shadow-[0_0_10px_rgba(0,20,60,0.5)]">
      <header class="flex h-[31px] shrink-0 items-center pl-[7px] text-[12px] text-[#999]">
        <svg class="h-[17px] w-[14px]"><use href="#folderf"/></svg>
        <span class="ml-[6px] h-[15px] w-px bg-[#777]"></span>
        <svg class="ml-[12px] h-[16px] w-[14px]"><use href="#prop"/></svg>
        <svg class="ml-[14px] size-[16px]"><use href="#folder"/></svg>
        <span class="ml-[9px] flex w-[8px] flex-col items-center gap-px text-black"><span class="h-px w-[7px] bg-black"></span><svg class="size-[7px]"><use href="#tri"/></svg></span>
        <span class="ml-[11px] h-[15px] w-px bg-[#777]"></span>
        <h1 class="ml-[5px] whitespace-nowrap">GermanSalesCo_Performer.1.0.32 (Optimized &amp; Integrated)</h1>
        <div class="ml-auto flex items-center gap-[38px] pr-[19px] text-[#777]">
          <button aria-label="Minimize"><svg class="size-[11px]"><use href="#min"/></svg></button>
          <button aria-label="Maximize"><svg class="size-[11px]"><use href="#max"/></svg></button>
          <button aria-label="Close"><svg class="size-[11px]"><use href="#x"/></svg></button>
        </div>
      </header>
      <nav class="flex h-[25px] shrink-0 text-[11px] text-[#333]">
        <button class="w-[60px] bg-[#0066b4] text-white">File</button>
        <button class="relative z-10 -mb-px w-[58px] border border-b-0 border-[#d9dadb] bg-[#f5f6f7]">Home</button>
        <button class="w-[58px]">Share</button>
        <button class="w-[54px]">View</button>
        <div class="ml-auto flex items-center gap-[8px] pr-[3px]"><svg class="size-[11px] text-[#999]"><use href="#up"/></svg><button aria-label="Help" class="flex size-[16px] items-center justify-center rounded-full bg-[#0d68b8] text-[11px] font-semibold text-white">?</button></div>
      </nav>
      <div id="ribbon1" class="flex h-[98px] shrink-0 border-y border-[#d9dadb] bg-[#f5f6f7] text-[11px] text-[#333]"></div>
      <div class="flex h-[42px] shrink-0 items-center pr-[9px] text-[12px]">
        <div class="flex w-[112px] shrink-0 items-center gap-[13px] pl-[12px] text-[#777]">
          <svg class="size-[15px]"><use href="#aleft"/></svg><svg class="ml-[3px] size-[15px] text-[#d3d3d3]"><use href="#aright"/></svg><svg class="size-[7px]"><use href="#down"/></svg><svg class="size-[15px]"><use href="#aup"/></svg>
        </div>
        <div class="flex h-[33px] w-[379px] shrink-0 items-center border border-[#d9d9d9]">
          <svg class="size-[17px]"><use href="#folder"/></svg><span class="ml-[7px] text-[#444]">«</span><span class="ml-[8px]">UiPat...</span>
          <svg class="ml-[8px] size-[9px] text-[#555]"><use href="#right"/></svg><span class="ml-[8px] flex-1 whitespace-nowrap">GermanSalesCo_Performer.1....</span>
          <svg class="mr-[10px] size-[12px] text-[#777]"><use href="#down"/></svg>
          <button aria-label="Refresh" class="flex h-full w-[34px] items-center justify-center border-l border-[#d9d9d9] text-[#777]"><svg class="size-[13px]"><use href="#reload"/></svg></button>
        </div>
        <label class="ml-[8px] flex h-[33px] min-w-0 flex-1 items-center border border-[#d9d9d9] pl-[15px] text-[#888]">
          <svg class="size-[14px]"><use href="#glassl"/></svg>
          <input class="ml-[13px] min-w-0 flex-1 outline-none placeholder:text-[#707070]" placeholder="Search GermanSalesCo_Performer.1.0.32 (Optimized &amp; Integrated)" aria-label="Search folder">
        </label>
      </div>
      <div class="flex min-h-0 flex-1 text-[12px]">
        <div id="tree" class="w-[297px] shrink-0 overflow-hidden pt-[18px]"></div>
        <div class="flex w-[18px] shrink-0 flex-col items-center bg-[#f0f0f0] text-[#505050]">
          <span class="flex h-[19px] items-center"><svg class="size-[10px]"><use href="#up"/></svg></span>
          <span class="h-[207px] w-full bg-[#cdcdcd]"></span>
          <svg class="mt-auto mb-[5px] size-[10px]"><use href="#down"/></svg>
        </div>
        <div class="ml-[2px] min-w-0 flex-1 overflow-hidden border-l border-[#eee]">
          <table id="files" class="h-[470px] w-[658px] table-fixed border-separate border-spacing-0 whitespace-nowrap text-[#6d6d6d]">
            <colgroup><col class="w-[292px]"><col class="w-[153px]"><col class="w-[128px]"><col class="w-[85px]"></colgroup>
            <thead><tr class="h-[29px] text-left text-[#4c607a]">
              <th class="border-r border-[#e5e5e5] p-0 font-normal"><span class="flex items-center pl-[14px]"><input type="checkbox" aria-label="Select all" class="size-[14px] appearance-none border border-[#333]"><span class="ml-[11px]">Name</span><svg class="mb-[14px] ml-[75px] size-[9px] text-[#777]"><use href="#up"/></svg></span></th>
              <th class="border-r border-[#e5e5e5] p-0 pl-[6px] font-normal">Date modified</th>
              <th class="border-r border-[#e5e5e5] p-0 pl-[6px] font-normal">Type</th>
              <th class="border-r border-[#e5e5e5] p-0 pl-[6px] font-normal">Size</th>
            </tr></thead>
          </table>
        </div>
        <div class="flex w-[17px] shrink-0 flex-col items-center bg-[#f0f0f0] text-[#505050]">
          <span class="flex h-[19px] items-center"><svg class="size-[10px]"><use href="#up"/></svg></span>
          <span class="mb-[6px] w-full flex-1 bg-[#cdcdcd]"></span>
          <svg class="my-[5px] size-[10px]"><use href="#down"/></svg>
        </div>
      </div>
      <footer class="flex h-[23px] shrink-0 items-center text-[12px] whitespace-pre text-[#2b4263]">
        <span class="w-[76px] border-r border-[#e2e2e2] pl-[16px] leading-[16px]">19 items</span>
        <span class="w-[158px] border-r border-[#e2e2e2] pl-[13px] leading-[16px]">1 item selected  65.4 KB</span>
        <span class="ml-auto flex h-full w-[23px] items-center justify-center border border-b-0 border-[#3a9bcf] bg-[#cbe8f6]"><svg class="h-[15px] w-[16px]" viewBox="0 0 16 16"><path fill="#fff" stroke="#888" d="M.5.500h4v15h-4zM.5 4h4M.5 8h4M.5 12h4"/><path stroke="#555" d="M6 2.500h4M11.500 2.500H16M6 6.500h4M11.500 6.500H16M6 10h4M11.500 10H16M6 14h4M11.500 14H16"/></svg></span>
        <svg class="mx-[5px] h-[13px] w-[15px]"><use href="#pictures"/></svg>
        <span class="w-[4px]"></span>
      </footer>
    </div>
  </div>
  <div id="bar1" class="flex h-[43px] shrink-0 bg-linear-to-r from-[#23393f] via-[#20343f] via-60% to-[#1a2541] text-[12px] text-white"></div>
</section>

<!-- ============ Screen 2: Orchestrator in Chrome ============ -->
<section class="flex min-w-0 flex-col overflow-hidden bg-[#e8eff3] font-[Roboto,sans-serif] text-[#4a5157]">
  <header class="flex h-[24px] shrink-0 bg-[#386a74] font-['Open_Sans',sans-serif] text-[8px] text-white">
    <div class="ml-[6px] flex w-[170px] items-center rounded-t-[5px] bg-[#035a6d] pl-[8px]">
      <span class="flex h-[12px] w-[12px] items-center justify-center border border-[#0a6ee0] text-[8px] leading-none font-bold text-[#0a6ee0]">Ui</span>
      <span class="ml-[5px]">Queues - UiPath Orchestrator</span>
      <button aria-label="Close tab" class="mr-[8px] ml-auto"><svg class="size-[6px]"><use href="#x"/></svg></button>
    </div>
    <button aria-label="New tab" class="ml-[12px]"><svg class="size-[8px]"><use href="#plus"/></svg></button>
    <div class="mb-[4px] ml-auto flex items-center gap-[25px] pr-[12px] text-[#a9c3c8]"><svg class="size-[8px]"><use href="#down"/></svg><svg class="size-[7px]"><use href="#min"/></svg><svg class="size-[8px]"><use href="#restore"/></svg><svg class="size-[8px]"><use href="#x"/></svg></div>
  </header>
  <div class="flex h-[26px] shrink-0 items-center bg-[#035a6d] pr-[9px] font-['Open_Sans',sans-serif] text-[10px]">
    <div class="flex w-[77px] shrink-0 items-center gap-[12px] pl-[10px] text-[#4f7a80]"><svg class="size-[11px]"><use href="#aleft"/></svg><svg class="size-[11px] text-[#2b6d7c]"><use href="#aright"/></svg><svg class="size-[12px] text-[#8ff0e6]"><use href="#reload"/></svg></div>
    <div class="flex h-[20px] min-w-0 flex-1 items-center rounded-full bg-[#0e4856] pr-[8px] pl-[8px]">
      <svg class="size-[8px] shrink-0 text-[#8fb0b6]"><use href="#lock"/></svg>
      <label class="ml-[8px] flex-1 whitespace-nowrap text-[#9db8bd]"><span class="text-white">idc091xa696.uk.parker.corp</span>:447/queues?tid=2&amp;fid=59&amp;index=0&amp;size=10&amp;state=M4ewTgLgPgZglgUwDYBMoDsCGBbBUVxgIDGEcI6UmwxAevQCQAMUDAjFAExQDMUALAF1BQA%3D</label>
      <svg class="size-[12px] text-[#6a8388]"><use href="#share"/></svg><svg class="ml-[20px] size-[12px] text-[#6a8388]"><use href="#starl"/></svg>
    </div>
    <svg class="ml-[16px] size-[13px] text-[#8ff0e6]"><use href="#puzzle"/></svg>
    <span class="ml-[17px] flex size-[15px] items-center justify-center rounded-full bg-[#0557a8] text-[8px] text-white">K</span>
    <svg class="ml-[11px] size-[10px] text-[#5c8890]"><use href="#dots"/></svg>
  </div>
  <div class="relative z-10 flex h-[46px] shrink-0 items-center border-t border-[#d5e4dc] bg-[#00762d] pr-[11px] text-[10px] text-white shadow-[0_2px_8px_rgba(0,0,0,0.18)]">
    <a href="#" class="ml-[13px] flex items-center text-[20px] leading-none font-medium text-[#e9f5ec]"><span class="flex h-[23px] w-[24px] items-center justify-center border-[2px] border-[#e9f5ec]">Ui</span><span class="ml-[2px] text-[19px]">Path</span></a>
    <div class="ml-[87px] flex items-center text-[#00561f]"><svg class="h-[12px] w-[14px]"><use href="#foldd"/></svg><span class="ml-[5px]">USPHC</span></div>
    <svg class="ml-[14px] size-[9px]"><use href="#right"/></svg>
    <span class="ml-[14px] flex gap-[2px]"><i class="size-[4px] rounded-full bg-white"></i><i class="size-[4px] rounded-full bg-white"></i><i class="size-[4px] rounded-full bg-white"></i></span>
    <svg class="ml-[15px] size-[9px]"><use href="#right"/></svg>
    <label class="relative ml-[5px] flex h-[26px] w-[170px] items-center rounded-[3px] bg-white shadow-[0_2px_5px_rgba(0,0,0,0.3)]">
      <select aria-label="Folder" class="w-full appearance-none pl-[11px] font-medium text-[#0566dc] outline-none"><option>COR089_BusinessSystem...</option></select>
      <svg class="pointer-events-none absolute right-[15px] size-[8px] text-[#0566dc]"><use href="#tri"/></svg>
    </label>
    <svg class="ml-auto size-[15px]"><use href="#help"/></svg><svg class="ml-[14px] size-[14px]"><use href="#bell"/></svg>
    <button class="ml-[11px] size-[25px] rounded-full bg-[#dc3912] text-[10px] font-medium">KC</button>
  </div>
  <div class="flex min-h-0 flex-1">
    <aside class="flex w-[196px] shrink-0 flex-col border-r border-[#d3d9dc] bg-white pt-[6px] text-[9px] font-medium">
      <a href="#" class="flex h-[28px] items-center pl-[18px]"><svg class="size-[14px]"><use href="#globe"/></svg><span class="ml-[6px]">Tenant</span></a>
      <a href="#" class="flex h-[28px] items-center pl-[19px]"><svg class="size-[12px]"><use href="#actions"/></svg><span class="ml-[7px]">Actions</span></a>
      <div class="mr-[3px] h-[7px] border-b border-[#d9dcde]"></div>
      <h2 class="flex h-[22px] items-center pl-[8px] font-normal text-[#6b7379]">MY FOLDERS</h2>
      <label class="flex h-[24px] items-center pr-[10px] pl-[18px]"><svg class="size-[14px]"><use href="#foldg"/></svg><span class="ml-[6px] flex h-[21px] min-w-0 flex-1 items-center border-b border-[#cfd4d7]"><input placeholder="Search" aria-label="Search folders" class="min-w-0 flex-1 font-normal italic outline-none placeholder:text-[#6b7379]"><svg class="mr-[3px] size-[11px] text-[#cfd4d7]"><use href="#glass"/></svg></span></label>
      <ul id="folders" class="mt-[6px] flex h-[228px] flex-col"></ul>
    </aside>
    <main class="flex min-w-0 flex-1 flex-col">
      <nav id="tabs2" class="flex h-[41px] shrink-0 border-b border-[#d3d9dc] bg-white text-[10px] text-[#6b7379]"></nav>
      <div class="flex flex-col pr-[14px] pl-[15px] text-[9px] font-medium">
        <div class="mt-[14px] flex gap-[15px]">
          <button class="flex h-[23px] w-[58px] items-center rounded-full bg-[#4a5157] pl-[6px] text-white"><svg class="size-[11px]"><use href="#queue"/></svg><span class="ml-[5px]">Queues</span></button>
          <button class="flex h-[23px] w-[94px] items-center rounded-full border border-[#d6dbde] bg-white pl-[5px] font-normal"><svg class="size-[12px]"><use href="#review"/></svg><span class="ml-[5px]">Review Requests</span></button>
        </div>
        <div class="mt-[12px] flex items-center pl-[12px]">
          <button aria-label="Columns"><svg class="size-[12px]"><use href="#cols"/></svg></button>
          <label class="ml-[12px] flex h-[23px] w-[100px] items-center border-b border-[#c3cace] text-[11px] font-normal"><input placeholder="Search" aria-label="Search queues" class="w-[80px] outline-none placeholder:text-[#6b7379]"><svg class="ml-[4px] size-[12px]"><use href="#glass"/></svg></label>
          <label class="relative ml-[18px] flex items-center"><select aria-label="Has Trigger" class="w-[80px] appearance-none outline-none"><option>Has Trigger: All</option></select><svg class="pointer-events-none absolute right-[2px] size-[9px]"><use href="#down"/></svg></label>
        </div>
        <div class="relative mt-[11px] rounded-[3px] bg-white shadow-[0_1px_1px_rgba(0,0,0,0.4)]">
          <button aria-label="Add queue" class="absolute -top-[14px] right-[29px] flex size-[28px] items-center justify-center rounded-full bg-[#0566dc] text-white shadow-[0_2px_5px_rgba(0,0,0,0.35)]"><svg class="size-[11px]"><use href="#plus"/></svg></button>
          <table class="w-full table-fixed text-left">
            <colgroup><col class="w-[24px]"><col class="w-[211px]"><col class="w-[107px]"><col class="w-[77px]"><col class="w-[76px]"><col class="w-[159px]"><col class="w-[97px]"><col class="w-[97px]"><col class="w-[97px]"><col><col class="w-[37px]"></colgroup>
            <thead id="qhead"></thead><tbody id="qbody" class="text-[10px]"></tbody>
          </table>
          <footer class="flex h-[40px] items-center justify-end pr-[13px] font-normal text-[#5d656b]">
            <label for="items">Items</label>
            <span class="relative ml-[6px] flex w-[40px] items-center border-b border-[#cfd4d7]"><select id="items" class="w-full appearance-none leading-[14px] outline-none"><option>10</option></select><svg class="pointer-events-none absolute right-[3px] size-[7px]"><use href="#tri"/></svg></span>
            <span class="ml-[25px] w-[57px]">1 - 3 / 3</span>
            <span class="flex gap-[17px] text-[#b3babf]"><svg class="size-[11px]"><use href="#first"/></svg><svg class="size-[11px]"><use href="#left"/></svg><svg class="size-[11px]"><use href="#right"/></svg><svg class="size-[11px]"><use href="#last"/></svg></span>
          </footer>
        </div>
      </div>
    </main>
  </div>
  <div id="bar2" class="flex h-[28px] shrink-0 bg-linear-to-r from-[#23393f] via-[#20343f] via-60% to-[#1a2541] font-['Open_Sans',sans-serif] text-[8px] text-white"></div>
</section>

<!-- ============ Screen 3: UiPath Studio ============ -->
<section class="flex min-w-0 flex-col overflow-hidden bg-[#f4f6f6] text-[8px] text-[#222]">
  <header class="flex h-[21px] shrink-0 items-center bg-[#1976d2] text-[9px] text-white">
    <nav class="flex h-full flex-1"><button class="w-[51px]">HOME</button><button class="w-[55px] bg-[#fbfbfb] text-[#1976d2]">DESIGN</button><button class="w-[50px]">DEBUG</button></nav>
    <h1 class="text-[8px]">OEC_SR_ServiceRequests_Dispatcher - UiPath Studio</h1>
    <div class="flex flex-1 items-center justify-end pr-[12px]">
      <svg class="size-[12px] -scale-x-100"><use href="#glass"/></svg><svg class="ml-[11px] size-[13px]"><use href="#feedback"/></svg><svg class="ml-[7px] size-[12px]"><use href="#qm"/></svg><svg class="ml-[2px] size-[5px]"><use href="#down"/></svg>
      <span class="ml-[5px] flex size-[16px] items-center justify-center rounded-full bg-[#eef3f8] text-[8px] text-black">KC</span>
      <svg class="ml-[16px] size-[8px]"><use href="#min"/></svg><svg class="ml-[23px] size-[8px]"><use href="#restore"/></svg><svg class="ml-[23px] size-[8px]"><use href="#x"/></svg>
    </div>
  </header>
  <div id="ribbon3" class="flex h-[54px] shrink-0 border-b border-[#d6d8d9] bg-[#fbfbfb] py-[3px] text-[#8b8b8b]"></div>
  <div class="mt-[4px] flex min-h-0 flex-1 pl-[4px]">
    <!-- Output -->
    <div class="flex w-[205px] shrink-0 flex-col">
      <div class="flex min-h-0 flex-1 flex-col border border-[#dddfe0] bg-[#fbfbfb]">
        <div class="flex h-[18px] shrink-0 items-center pl-[5px]"><h2>Output</h2><span class="mx-[6px] h-[4px] flex-1 bg-[radial-gradient(#b5b5b5_0.6px,transparent_0.8px)] bg-size-[3px_2px]"></span><svg class="size-[7px]"><use href="#down"/></svg><svg class="mr-[6px] ml-[6px] h-[9px] w-[6px]"><use href="#spin"/></svg></div>
        <div class="flex h-[19px] shrink-0 items-center pl-[9px]"><svg class="size-[11px]"><use href="#clock"/></svg><svg class="mt-auto mr-px mb-px ml-auto size-[6px]"><use href="#down"/></svg></div>
        <input placeholder="Search" aria-label="Search output" class="h-[17px] shrink-0 border border-x-0 border-[#cfd1d2] bg-white px-[4px] outline-none placeholder:text-[#999]">
        <div class="flex min-h-0 flex-1 bg-white">
          <ul id="log" class="flex min-w-0 flex-1 flex-col gap-[2px] pt-[2px] pl-[4px] leading-[11px]"></ul>
          <div class="flex w-[10px] shrink-0 flex-col items-center bg-[#fbfbfb] text-[#666]"><svg class="mt-[3px] size-[7px]"><use href="#up"/></svg><span class="mt-[156px] w-[8px] flex-1 bg-[#e2e3e4]"></span><svg class="my-[3px] size-[7px]"><use href="#down"/></svg></div>
        </div>
      </div>
      <nav class="flex h-[15px] shrink-0 items-center text-[#444]">
        <button class="flex items-center pl-[4px]"><svg class="size-[11px] text-[#777]"><use href="#fold"/></svg><span class="ml-[4px]">Project</span></button>
        <button class="ml-[8px] flex items-center"><svg class="h-[12px] w-[10px]"><use href="#bag"/></svg><span class="ml-[4px]">Activities</span></button>
        <button class="ml-[4px] h-[15px] w-[35px] border border-t-0 border-[#dddfe0] bg-[#fbfbfb] text-[#1976d2]">Output</button>
        <button class="ml-[5px] flex items-center"><svg class="h-[12px] w-[10px]"><use href="#snip"/></svg><span class="ml-[4px]">Snippets</span></button>
      </nav>
    </div>
    <!-- Designer -->
    <div class="ml-[4px] flex min-w-0 flex-1 flex-col">
      <div class="flex h-[17px] shrink-0 items-end border-b-2 border-[#1976d2] pr-[3px]"><button class="flex h-[16px] w-[86px] items-center bg-[#1976d2] pl-[4px] text-white">Main (ReadOnly)<svg class="mr-[4px] ml-auto size-[7px]"><use href="#x"/></svg></button><svg class="mb-[4px] ml-auto size-[7px]"><use href="#down"/></svg></div>
      <div class="flex h-[21px] shrink-0 items-center border-x border-b border-[#d6d8d9] bg-white px-[5px]"><a href="#">Main</a><button class="ml-auto">Expand All</button><button class="ml-[7px]">Collapse All</button></div>
      <div class="flex min-h-0 flex-1 border-x border-[#d6d8d9] bg-white pr-px">
        <div id="canvas" class="relative min-w-0 flex-1 overflow-hidden text-[#555]">
          <div class="absolute top-[21px] bottom-[3px] left-[239px] w-[488px] border border-b-0 border-[#d6d8d9]">
            <div class="flex h-[15px] items-center border-b border-[#d6d8d9] bg-[#f4f6f6] pr-[3px] pl-[2px] text-black"><svg class="size-[11px]"><use href="#flow"/></svg><span class="ml-[4px]">General Business Process</span><svg class="ml-auto size-[7px]"><use href="#upup"/></svg></div>
            <p class="pt-[5px] pl-[14px] leading-[11px] whitespace-nowrap">[Process title]<br>[Process description]<br>[Additional information (e.g., author, contact information and applications involved and required external setup)]</p>
          </div>
          <div class="absolute top-[98px] left-[301px] flex h-[53px] w-[42px] flex-col items-center rounded-[2px] border border-[#cfd1d6] bg-white pt-[7px] text-[#333]">
            <svg class="size-[28px] shrink-0" viewBox="0 0 28 28"><circle cx="14" cy="14" r="13" fill="#fff" stroke="#77797d" stroke-width="1.600"/><path fill="#1976d2" d="m11 7 11 7-11 7z"/></svg><span class="mt-[2px]">Start</span>
          </div>
          <svg class="absolute top-0 left-0 size-full">
            <g fill="none" stroke="#d1d3da" stroke-width="1.600"><path d="M343 123.500H364V122.500H402"/><path d="M499 160V226"/><path d="M499 176q0 4-4 4H313q-4 0-4 4V224"/><path d="M499 314V329q0 4-4 4H318q-4 0-4-4V320"/><path d="M499 329q0 4-3 4-4 0-4 4V450"/><path d="M609.500 563V130q0-4-4-4H596"/><path d="M609 270V260q0-4-4-4H596M609 300V292q0-4-4-4H596"/><path stroke-width="3" d="M609 563V256"/></g>
            <g fill="#a5a7ab"><path d="m401 118 8 4.500-8 4.500zM495 225h8l-4 7zM305 222h8l-4 7zM310 321h8l-4-7zM488 448h8l-4 7zM597 122v8l-8-4zM596 252v8l-8-4zM596 284v8l-8-4z"/></g>
          </svg>
        </div>
        <div class="flex w-[11px] shrink-0 flex-col bg-[#f0f0f0] py-px text-[#999]"><span class="flex h-[10px] items-center justify-center border border-[#aaa] bg-white"><svg class="size-[5px]"><use href="#triup"/></svg></span><span class="mt-px h-[452px] border border-[#aaa] bg-white"></span><span class="mt-auto mb-[3px] flex h-[11px] items-center justify-center border border-[#aaa] bg-white"><svg class="size-[5px]"><use href="#tri"/></svg></span></div>
      </div>
      <div class="flex h-[16px] shrink-0 items-center bg-[#f0f0f0] pr-[4px] pl-[5px] text-black"><button>Variables</button><button class="ml-[12px]">Arguments</button><button class="ml-[12px]">Imports</button><svg class="ml-auto size-[11px]"><use href="#hand"/></svg><svg class="ml-[8px] size-[10px] -scale-x-100"><use href="#glass"/></svg>
        <label class="relative ml-[10px] flex items-center"><select aria-label="Zoom" class="w-[50px] appearance-none outline-none"><option>100%</option></select><svg class="pointer-events-none absolute right-[2px] size-[6px]"><use href="#tri"/></svg></label><svg class="ml-[7px] size-[11px]"><use href="#fit"/></svg><svg class="ml-[8px] size-[11px]"><use href="#fit2"/></svg></div>
    </div>
    <!-- Properties -->
    <div class="ml-[4px] flex w-[146px] shrink-0 flex-col">
      <div class="flex min-h-0 flex-1 flex-col border border-[#d6d8d9] bg-white">
        <div class="flex h-[17px] shrink-0 items-center border-b border-[#d6d8d9] bg-[#fbfbfb] pl-[4px]"><h2>Properties</h2><span class="mx-[6px] h-[4px] flex-1 bg-[radial-gradient(#b5b5b5_0.6px,transparent_0.8px)] bg-size-[3px_2px]"></span><svg class="size-[7px]"><use href="#down"/></svg><svg class="mr-[5px] ml-[7px] h-[9px] w-[6px]"><use href="#spin"/></svg></div>
        <div class="flex h-[19px] shrink-0 items-center bg-[#f4f6f6] pl-[2px] whitespace-nowrap">System.Activities.ActivityBuilder</div>
        <div class="flex h-[14px] shrink-0 items-center border border-dashed border-[#888] bg-[#f4f6f6] pl-px font-bold"><span class="mr-[5px] flex size-[7px] items-center justify-center border border-[#444]"><i class="h-px w-[3px] bg-[#444]"></i></span>Misc</div>
        <div class="flex h-[16px] shrink-0 items-center border-b border-[#eee]"><span class="h-full w-[10px] bg-[#f4f6f6]"></span><label for="dn" class="w-[79px] pl-[4px]">DisplayName</label><input id="dn" value="Main" class="h-full min-w-0 flex-1 border-l border-[#eee] pl-[2px] text-[#999] outline-none"></div>
      </div>
      <nav class="flex h-[15px] shrink-0 items-center text-[#444]"><button class="flex w-[38px] items-center pl-[4px]"><svg class="mr-[3px] size-[12px]"><use href="#objx"/></svg>O...</button><button class="flex h-[15px] w-[36px] items-center border border-t-0 border-[#dddfe0] bg-[#fbfbfb] pl-[3px] text-[#1976d2]"><svg class="mr-[3px] size-[11px]"><use href="#wrench"/></svg>P...</button><button class="flex w-[38px] items-center pl-[4px]"><svg class="mr-[3px] size-[11px]"><use href="#outl"/></svg>O...</button><button class="flex items-center pl-[2px]"><svg class="mr-[4px] size-[11px]"><use href="#texp"/></svg>T...</button></nav>
    </div>
    <div class="flex w-[23px] shrink-0 justify-end"><button class="flex h-[52px] w-[17px] flex-col items-center bg-[#eef0f0] text-[#555]"><svg class="mt-px size-[11px] shrink-0" viewBox="0 0 11 11"><path fill="none" stroke="#666" d="M2 3V.500h8.500V8"/><path fill="none" stroke="#1976d2" stroke-width="1.200" d="M1 4.500h2.500V7H1zM5.500 4.500H8V7H5.500zM1 8.500h2.500V11H1zM5.500 8.500H8V11H5.500z"/></svg><span class="mt-[2px] leading-[10px] [writing-mode:vertical-rl]">Resources</span></button></div>
  </div>
  <div class="flex h-[22px] shrink-0 items-end gap-[9px] pl-[4px] text-[#444]"><button class="border-b-4 border-[#e9ebeb] pb-px leading-[13px]">Error List</button><button class="border-b-4 border-[#e9ebeb] pb-px leading-[13px]">Find References</button><button class="border-b-4 border-[#e9ebeb] pb-px leading-[13px]">Breakpoints</button></div>
  <footer class="flex h-[17px] shrink-0 items-center justify-end bg-[#1976d2] pr-[12px] whitespace-nowrap text-white">
    <span class="flex h-[12px] w-[9px] items-center justify-center rounded-[2px] bg-[#8fc0f2] text-[7px] text-[#1976d2]">O</span><svg class="ml-[4px] size-[5px]"><use href="#down"/></svg>
    <i class="ml-[15px] size-[5px] rounded-full bg-[#4a6f96]"></i><span class="ml-[5px]">USPHC/COR/COR089/COR0...</span><svg class="ml-[3px] size-[5px]"><use href="#down"/></svg>
    <svg class="ml-[24px] size-[11px]"><use href="#push"/></svg><span class="ml-[3px]">0</span><svg class="ml-[12px] size-[10px]"><use href="#pencil"/></svg><span class="ml-[3px]">2</span>
    <svg class="ml-[14px] size-[11px]"><use href="#git"/></svg><span class="ml-[3px] w-[121px] overflow-hidden">OEC_SR_ServiceRequests_Dispatc</span>
    <svg class="ml-[11px] size-[10px]"><use href="#branch"/></svg><span class="ml-[3px]">main</span><svg class="ml-[3px] size-[5px]"><use href="#down"/></svg><span class="ml-[13px]">VB, Windows - Legacy</span>
  </footer>
  <div id="bar3" class="flex h-[28px] shrink-0 bg-linear-to-r from-[#23393f] via-[#20343f] via-60% to-[#1a2541] text-[8px] text-white"></div>
</section>

<script>
const $ = id => document.getElementById(id);
const ic = (id, cls) => `<svg class="${cls}"><use href="#${id}"/></svg>`;

// Explorer ribbon
const big = (w, icon, size, l1, l2 = '', dim = '') => `<button class="flex ${w} shrink-0 flex-col items-center whitespace-nowrap leading-[15px] ${dim}"><span class="mt-[9px] mb-[5px] flex h-[30px] items-center">${ic(icon, size)}</span><span>${l1}</span><span class="flex items-center">${l2}</span></button>`;
const small = (icon, t, dim = '', arrow = '') => `<button class="flex h-[23px] items-center gap-[4px] whitespace-nowrap ${dim}">${ic(icon, 'size-[16px]')}${t}${arrow}</button>`;
const tri = ic('tri', 'size-[8px] text-black');
const group = (w, label, body) => `<div class="flex ${w} shrink-0 flex-col"><div class="flex flex-1">${body}</div><div class="pb-[3px] text-center leading-[14px] text-[#555]">${label}</div></div><span class="my-[2px] w-px bg-[#dedfe1]"></span>`;
$('ribbon1').innerHTML =
  group('w-[260px]', 'Clipboard',
    big('w-[76px]', 'pin', 'size-[22px] text-[#a7b5c8]', 'Pin to Quick', 'access', 'text-[#7d7d7d]') +
    big('w-[33px]', 'copy', 'h-[30px] w-[26px]', 'Copy') +
    big('w-[54px]', 'paste', 'h-[30px] w-[22px]', 'Paste', '', 'text-[#7d7d7d]') +
    `<div class="flex flex-col pt-[4px]">${small('cut', 'Cut')}${small('path', 'Copy path')}${small('shortcut', 'Paste shortcut', 'text-[#7d7d7d]')}</div>`) +
  group('w-[196px]', 'Organize',
    big('w-[52px]', 'moveto', 'h-[30px] w-[28px]', 'Move', 'to&nbsp;' + tri) +
    big('w-[35px]', 'copyto', 'h-[32px] w-[28px]', 'Copy', 'to&nbsp;' + tri) +
    `<span class="mt-[7px] mr-[2px] ml-[8px] h-[64px] w-px bg-[#d9dadb]"></span>` +
    big('w-[46px]', 'del', 'h-[27px] w-[26px]', 'Delete', tri) +
    big('w-[45px]', 'rename', 'h-[28px] w-[30px]', 'Rename')) +
  group('w-[145px]', 'New',
    big('w-[50px]', 'newfolder', 'h-[30px] w-[20px]', 'New', 'folder') +
    `<div class="flex flex-col pt-[4px]">${small('newitem', 'New item', '', tri)}${small('easy', 'Easy access', '', tri)}</div>`) +
  group('w-[128px]', 'Open',
    big('w-[61px]', 'prop', 'h-[30px] w-[24px]', 'Properties', tri) +
    `<div class="flex flex-col pt-[4px]">${small('studio', 'Open', '', tri)}${small('edit', 'Edit', 'text-[#7d7d7d]')}${small('history', 'History')}</div>`) +
  group('w-[111px]', 'Select', `<div class="flex flex-col pt-[4px] pl-[7px]">${small('selall', 'Select all')}${small('selnone', 'Select none')}${small('selinv', 'Invert selection')}</div>`);

// Explorer navigation tree
const root = (icon, t) => `<li class="flex min-h-0 flex-1 items-center pl-[27px]">${ic(icon, 'h-[14px] w-[16px]')}<span class="ml-[4px]">${t}</span></li>`;
const leaf = (icon, t, pinned, sel = '') => `<li class="flex min-h-0 flex-1 items-center pr-[3px] pl-[35px] whitespace-nowrap ${sel}">${ic(icon, 'size-[16px] shrink-0')}<span class="ml-[4px]">${t}</span>${pinned ? ic('pin', 'ml-auto size-[11px] text-[#8b98a4]') : ''}</li>`;
$('tree').innerHTML =
  `<ul class="flex h-[282px] flex-col">${root('qstar', 'Quick access')}${leaf('documents', 'Documents', 1)}${leaf('download', 'Downloads', 1)}${leaf('pictures', 'Pictures', 1)}${leaf('drive', 'QA (\\\\pkg0p1f06) (T:)', 1)}${leaf('folder', 'UiPath Training', 1)}${leaf('folder', 'GitHub', 1)}${leaf('folder', 'GermanSalesCo_Performer.1.0.32 (Optimized &amp; Integrated)')}${leaf('folder', 'Lookup')}${leaf('folder', 'OEC_SR_ServiceRequests_Dispatcher.2.0.2')}${leaf('folder', 'Python-Training')}</ul>` +
  `<ul class="my-[8px] flex h-[26px] flex-col">${root('cloud', 'OneDrive - parkercorp')}</ul>` +
  `<ul class="flex h-[128px] flex-col">${root('pc', 'This PC')}${leaf('cube', '3D Objects')}${leaf('desktop', 'Desktop')}${leaf('documents', 'Documents', 0, 'bg-[#d9d9d9]')}${leaf('download', 'Downloads')}</ul>`;

// Explorer files
const F = 'File folder', W = 'Windows.XamlDo...';
const files = [
  ['.entities', '2/17/2022 8:36 AM', F], ['.settings', '2/17/2022 8:37 AM', F], ['.templates', '2/17/2022 8:36 AM', F],
  ['.tmh', '2/17/2022 8:37 AM', F], ['_rels', '2/17/2022 8:36 AM', F], ['Data', '2/28/2022 8:50 AM', F],
  ['Exceptions_Screenshots', '3/3/2022 4:12 PM', F], ['Framework', '2/22/2022 1:03 PM', F], ['lib', '2/17/2022 11:54 AM', F],
  ['package', '2/17/2022 8:36 AM', F], ['Tests', '2/17/2022 8:36 AM', F],
  ['[Content_Types].xml', '8/17/2021 4:02 PM', 'XML Document', '1 KB', 'file'],
  ['GermanSalesCo_Performer.nuspec', '8/17/2021 4:02 PM', 'NUSPEC File', '1 KB', 'file'],
  ['GermanSalesCoQueueAssignment.xaml', '2/28/2022 10:09 AM', W, '36 KB', 'uifile'],
  ['Main.xaml', '2/22/2022 3:10 PM', W, '66 KB', 'uifile'],
  ['Postman_API_Update Sr.xaml', '2/28/2022 2:45 PM', W, '93 KB', 'uifile'],
  ['Process.xaml', '2/17/2022 2:19 PM', W, '12 KB', 'uifile'],
  ['project.json', '2/22/2022 3:07 PM', 'JSON File', '3 KB', 'note'],
  ['Sharepoint - Legacy Activities - Downl...', '2/23/2022 2:53 PM', W, '19 KB', 'uifile']];
const body = document.createElement('tbody');
body.innerHTML = '<tr class="h-[8px]"><td colspan="4" class="p-0"></td></tr>' + files.map(([n, d, t, s = '', i = 'folder']) => {
  const on = n === 'Main.xaml';
  const check = on ? `<label class="relative flex size-[14px]"><input type="checkbox" checked aria-label="Select Main.xaml" class="size-[14px] appearance-none border border-[#333] bg-white"><svg class="pointer-events-none absolute top-[2px] left-[2px] size-[10px]" viewBox="0 0 10 10"><path fill="none" stroke="#333" d="m1 5 3 4 5-8"/></svg></label>` : '';
  return `<tr class="leading-[16px] ${on ? 'bg-[#d9d9d9]' : ''}"><td class="p-0"><span class="flex items-center ${on ? '-ml-px' : ''}"><span class="flex w-[38px] justify-end pr-[5px]">${check}</span>${ic(i, 'size-[15px]')}<span class="ml-[6px] text-black">${n}</span></span></td><td class="p-0 pl-[7px]">${d}</td><td class="p-0 pl-[7px]">${t}</td><td class="p-0 pr-[5px] text-right">${s}</td></tr>`;
}).join('');
$('files').append(body);

// Orchestrator folders
const arrow = ic('down', 'mr-[7px] size-[7px]');
$('folders').innerHTML = [
  ['pl-[18px]', 'fold', 'COR089', '', ''], ['pl-[4px]', 'fold', 'USPHC', 'text-[#8b9297]', arrow], ['pl-[20px]', 'fold', 'COR', 'text-[#8b9297]', arrow],
  ['pl-[35px]', 'fold', 'COR089', '', arrow], ['pl-[65px]', 'foldu', 'COR089_BusinessSyste...', 'bg-[#dddfdf]', ''],
  ['pl-[65px]', 'fold', 'COR089_FinanceAdmini...', '', ''], ['pl-[65px]', 'fold', 'COR089_HumanResour...', '', ''], ['pl-[65px]', 'fold', 'COR089_SupplyChain', '', '']
].map(([p, i, t, c, a]) => `<li class="mr-[2px] flex min-h-0 flex-1 items-center whitespace-nowrap ${p} ${c}">${a}${ic(i, i === 'foldu' ? 'size-[14px] text-[#0566dc]' : 'size-[14px]')}<a href="#" class="ml-[6px]">${t}</a></li>`).join('');

$('tabs2').innerHTML = [
  ['home', 'Home', 'w-[71px]'], ['auto', 'Automations', 'w-[71px]'], ['monitor', 'Monitoring', 'w-[71px]'], ['queue', 'Queues', 'w-[71px]'],
  ['assets', 'Assets', 'w-[71px]'], ['storage', 'Storage Buckets', 'w-[87px]'], ['catalog', 'Action Catalogs', 'w-[85px]'], ['gear', 'Settings', 'w-[71px]']
].map(([i, t, w]) => `<a href="#" class="flex flex-col items-center border-b-2 pt-[6px] whitespace-nowrap ${w} ${t === 'Queues' ? 'border-[#0566dc] text-[#273139]' : t === 'Action Catalogs' ? 'border-transparent text-[#bcc1c5]' : 'border-transparent'}">${ic(i, t === 'Queues' ? 'size-[13px] text-[#0566dc]' : 'size-[13px]')}<span class="mt-[2px] leading-[14px]">${t}</span></a>`).join('');

const box = l => `<input type="checkbox" aria-label="${l}" class="block size-[11px] appearance-none rounded-[1px] border-[1.5px] border-[#4a5157]">`;
const head = (t, s) => `<th class="p-0 font-medium whitespace-nowrap"><span class="flex items-center">${ic('grip', 'mr-[9px] h-[11px] w-[6px] shrink-0')}${t}${s ? ic('sort', s) : ''}</span></th>`;
const near = 'ml-[6px] h-[9px] w-[6px] shrink-0', far = 'mr-[12px] ml-auto h-[9px] w-[6px] shrink-0';
$('qhead').innerHTML = `<tr class="h-[40px] border-b border-[#d9dcde]"><th class="p-0 pl-[12px]">${box('Select all queues')}</th><th class="p-0 pl-[15px] font-medium"><span class="flex items-center">NAME${ic('up', 'ml-[5px] size-[6px]')}</span></th>` +
  head('DESCRIPTION', near) + head('IN PROGRESS') + head('REMAINING') + head('AVERAGE TIME', near) + head('SUCCESSFUL', near) + head('APP EXCEPTI...', far) + head('BIZ EXCEPTIO...', far) + head('PROCESS', near) +
  `<th class="p-0 pl-[13px]"><button aria-label="Refresh" class="block">${ic('reload', 'size-[13px]')}</button></th></tr>`;
$('qbody').innerHTML = [['ClaimsEscalation', 0, 1, 'a few seconds', 0, 1, 2], ['EMEASalesCo', 0, 7, 0, 0, 0, 0], ['ServiceRequestsQueue', 0, 0, 0, 0, 0, 0]].map(r =>
  `<tr class="h-[34px] border-b border-[#d9dcde]"><td class="p-0 pl-[12px]">${box(r[0])}</td><td class="p-0 pl-[15px]">${r[0]}</td><td></td>` +
  r.slice(1).map((v, i) => `<td class="p-0 pl-[15px] ${i > 3 ? '' : 'font-normal text-[#6b7379]'}">${v}</td>`).join('') +
  `<td class="p-0 pl-[17px]">${ic('bolt', 'size-[13px]')}</td><td class="p-0 pl-[13px]"><button aria-label="More actions" class="block">${ic('dots', 'size-[13px]')}</button></td></tr>`).join('');

// Taskbars
const apps = ['explorer', 'outlook', 'chrome', 'swirl', 'edge', 'sticky', 'studio', 'camtasia'];
const quiet = ['swirl', 'edge'], multi = ['sticky', 'studio'];
const bar = (big, right) => {
  const cell = big ? 'w-[51px]' : 'w-[34px]', app = big ? 'mr-[10px] w-[43px]' : 'mr-[7px] w-[28px]';
  const g = big ? 'size-[19px]' : 'size-[13px]', a = big ? 'size-[25px]' : 'size-[17px]';
  return ['win', 'srch', 'taskview'].map(i => `<button aria-label="${i}" class="flex shrink-0 items-center justify-center ${cell}">${ic(i, g)}</button>`).join('') +
    `<span class="${big ? 'w-[8px]' : 'w-[5px]'}"></span>` +
    apps.map(i => `<button aria-label="${i}" class="flex shrink-0 flex-col items-center ${app}"><span class="flex flex-1 items-center">${ic(i, a)}</span><span class="flex h-[2px] w-full ${quiet.includes(i) ? '' : 'bg-[#76b9ed]'}">${multi.includes(i) ? '<i class="ml-auto w-1/5 bg-[#5687ae]"></i>' : ''}</span></button>`).join('') +
    `<div class="ml-auto flex items-center">${right}</div>`;
};
$('bar1').innerHTML = bar(true, '<div class="mr-[8px] w-[60px] text-center leading-[20px]">8:19 AM<br>3/4/2022</div>');
$('bar2').innerHTML = bar(false, `<span class="text-[9px]">55°F&nbsp;&nbsp; Mostly cloudy</span>${ic('up', 'ml-[8px] size-[9px]')}${ic('shield', 'ml-[7px] size-[12px]')}${ic('batt', 'ml-[6px] size-[11px]')}${ic('net', 'ml-[5px] size-[11px]')}${ic('vol', 'ml-[5px] size-[11px]')}<div class="ml-[8px] w-[36px] text-center leading-[13px]">8:19 AM<br>3/4/2022</div><span class="relative ml-[13px] flex w-[12px]">${ic('notif', 'size-[12px]')}<b class="absolute -right-[5px] -bottom-[6px] flex size-[11px] items-center justify-center rounded-full border border-[#888] bg-[#2a3240] text-[8px] leading-none">2</b></span><i class="ml-[12px] h-[28px] w-px bg-[#6b7585]"></i><i class="w-[3px]"></i>`);
$('bar3').innerHTML = bar(false, '<div class="mr-[5px] w-[36px] text-center leading-[13px]">8:19 AM<br>3/4/2022</div>');

// Studio ribbon
const dn = ic('down', 'ml-px size-[5px]');
const sb = (w, i, a, b = '', c = '') => `<button class="flex ${w} shrink-0 flex-col items-center whitespace-nowrap leading-[9px] ${c}">${ic(i, 'mt-[3px] mb-[6px] size-[17px]')}<span>${a}</span><span class="flex h-[10px] items-center">${b}</span></button>`;
const ss = (i, t, c = '') => `<button class="flex h-[16px] items-center gap-[3px] ${c}">${ic(i, 'size-[11px]')}${t}</button>`;
const sep = '<span class="w-px shrink-0 bg-[#d3d5d6]"></span>';
$('ribbon3').innerHTML =
  sb('ml-[2px] w-[24px]', 'snew', 'New', dn) + sb('w-[23px]', 'ssave', 'Save', dn) + sb('w-[39px]', 'sexport', 'Export as', 'Template') + sb('w-[26px]', 'sstop', 'Stop', '', 'text-black') + '<i class="w-[4px]"></i>' + sep +
  `<div class="flex w-[50px] flex-col pl-[8px]">${ss('scut', 'Cut')}${ss('scopy', 'Copy')}${ss('spaste', 'Paste')}</div><div class="flex w-[45px] flex-col text-black">${ss('undo', 'Undo')}${ss('redo', 'Redo')}</div>` + sep +
  sb('w-[52px]', 'spack', 'Manage', 'Packages') + sep + sb('w-[48px]', 'sent', 'Manage', 'Entities') + sep +
  sb('ml-[6px] w-[43px]', 'srec', 'Recording', dn) + sb('w-[43px]', 'sscr', 'Screen', 'Scraping') + sb('w-[38px]', 'sdata', 'Data', 'Scraping') + sb('w-[42px]', 'suser', 'User', 'Events' + dn) + sep +
  sb('w-[49px]', 'suix', 'UI', 'Explorer', 'text-black') + sep + sb('w-[51px]', 'srem', 'Remove', 'Unused' + dn) + sep + sb('w-[44px]', 'sana', 'Analyze', 'File' + dn) + sep +
  sb('w-[56px]', 'stest', 'Test', 'Manager' + dn, 'text-black') + sep + sb('w-[47px]', 'sxls', 'Export', 'to Excel') + sep + sb('w-[43px]', 'spub', 'Publish', dn) + sep +
  ic('up', 'mt-auto mr-[5px] ml-auto size-[8px] text-[#333]');

// Studio output log
const inv = ['e', 'Invoke OEC_Germany - Download LookUp\nand Populate CurrentQueue workflow: An\norganization unit is required for this action.\nError code: 1101'];
const run = (n, shot) => [
  ['w', `System exception. Retry: ${n}. An organization\nunit is required for this action. Error code:\n1101 at Source: Invoke OEC_Germany -\nDownload LookUp and Populate\nCurrentQueue workflow: Get SharePoint\nCredentials`],
  ['i', `Screenshot saved at: Exceptions_Screenshots\n\\ExceptionScreenshot_220304.${shot}.png`],
  ['t', 'Closing applications...'], ['t', 'Opening applications...'], ['i', 'Processing Transaction Number: 1'],
  ['t', 'Started:  OEC_Germany - Download LookUp\nand Populate CurrentQueue'],
  ['e', 'Get SharePoint Credentials: An organization\nunit is required for this action. Error code:\n1101'], inv];
const look = { e: ['lerr', 'text-[#d8112c]', ''], w: ['lwarn', 'text-[#a8590a]', ''], i: ['linfo', 'text-black', 'text-[#4a78e0]'], t: ['linfo', 'text-[#777]', 'text-[#777]'] };
$('log').innerHTML = [inv, ...run(0, '081955'), ...run(1, '081957')].map(([k, t]) =>
  `<li class="flex ${look[k][1]}">${ic(look[k][0], 'mt-[2px] mr-[3px] size-[8px] shrink-0 ' + look[k][2])}<span class="whitespace-pre">${t}</span></li>`).join('');

// Studio canvas nodes and transition labels
const node = (pos, title, text, tail = '') => `<div class="absolute flex flex-col border border-[#cfd1d6] bg-white ${pos}"><div class="flex h-[15px] shrink-0 items-center border-b border-[#cfd1d6] bg-[#f4f6f6] pl-[2px] text-black">${ic('state', 'mr-[5px] size-[11px]')}${title}</div><p class="pt-[5px] pl-[14px] leading-[11px] whitespace-pre">${text}</p>${tail}</div>`;
const tail = `<div class="mt-auto flex items-center justify-between pr-[11px] pb-[4px] pl-[10px]">${ic('enter', 'size-[13px]')}${ic('resize', 'size-[8px]')}</div>`;
const port = pos => `<i class="absolute size-[8px] rounded-full border border-[#cfd1d6] bg-[#f4f6f6] ${pos}"></i>`;
const pill = (pos, t) => `<span class="absolute flex h-[14px] items-center justify-center rounded-full border border-[#cfd1d6] bg-white whitespace-nowrap text-[#222] ${pos}">${t}</span>`;
$('canvas').insertAdjacentHTML('beforeend',
  node('top-[87px] left-[409px] h-[73px] w-[181px] rounded-[2px]', 'Initialization', 'Read configuration file and initialize\napplications used in the process.', tail) +
  node('top-[230px] left-[264px] h-[84px] w-[102px] rounded-[2px]', 'End Process', 'End process and\nclose all\napplications used.', tail) +
  node('top-[233px] left-[410px] h-[79px] w-[178px] rounded-[2px]', 'Get Transaction Data', 'Get the next transaction to be\nprocessed.', tail) +
  node('top-[456px] bottom-[3px] left-[410px] w-[164px] border-b-0', 'Process Transaction', 'Process a single transaction.\nThe result of the processing can be:\n1) Success, 2) Business Exception, 3)\nSystem Exception.\nIn the case of a system exception,\nthe transaction can be\nautomatically retried.') +
  port('top-[156px] left-[495px]') + port('top-[308px] left-[495px]') +
  pill('top-[174px] left-[375px] w-[59px]', 'System Exce...') + pill('top-[199px] left-[477px] w-[45px]', 'Successful') + pill('top-[326px] left-[389px] w-[37px]', 'No Data') +
  pill('top-[387px] left-[461px] w-[62px]', 'New Transact...') + pill('top-[361px] left-[582px] w-[59px]', 'System Exce...') + pill('top-[420px] left-[580px] w-[59px]', 'Business Exc...') + pill('top-[441px] left-[592px] w-[35px]', 'Success'));
</script>
</body>
</html>
